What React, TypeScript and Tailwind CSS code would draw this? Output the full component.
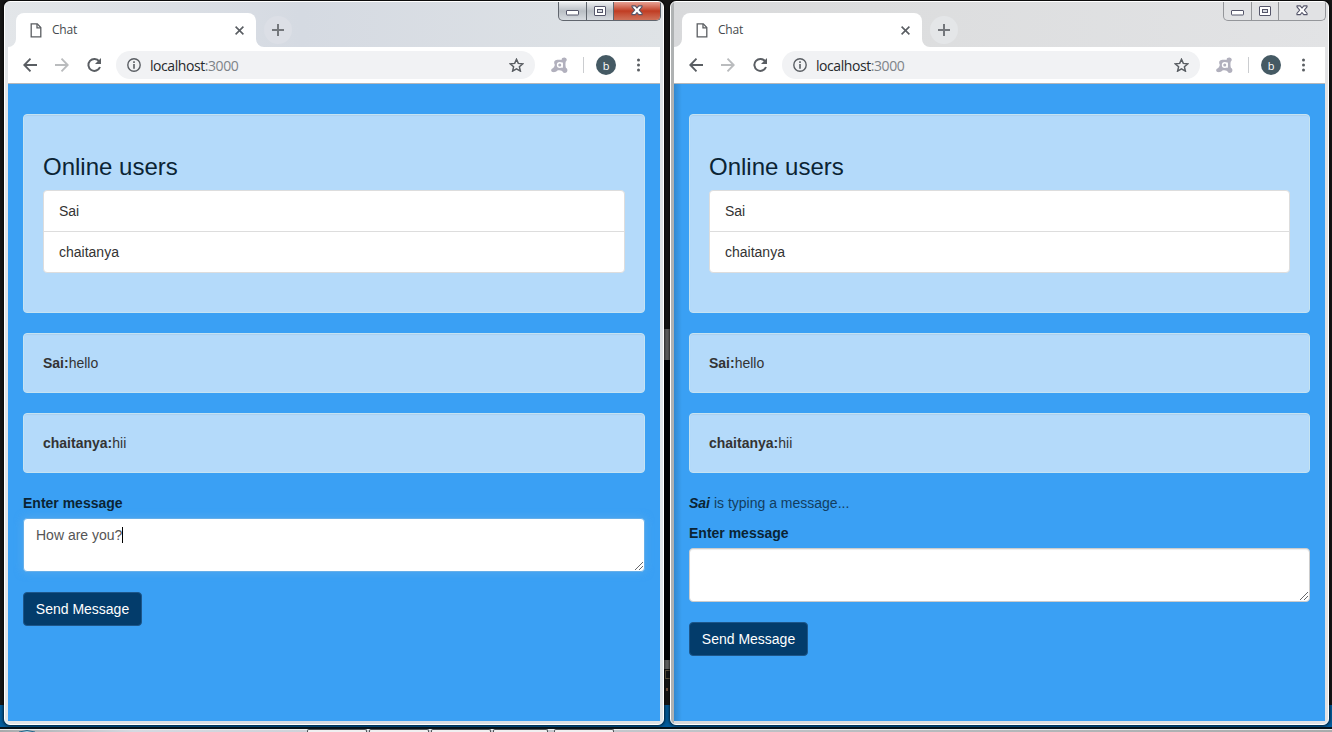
import React from "react";

const chromeFont = "font-['Open_Sans','Noto_Sans',sans-serif]";

function PageIcon() {
  return (
    <svg className="ml-[14px] shrink-0" width="12" height="15" viewBox="0 0 12 15" fill="none" stroke="#5a5d61" strokeWidth="1.3">
      <path d="M1.2 .9h6.1l3.5 3.6v9.3H1.2z" />
      <path d="M7 1v3.8h3.8" />
    </svg>
  );
}

function ExtensionIcon() {
  return (
    <svg className="shrink-0" width="17" height="17" viewBox="0 0 17 17">
      <path
        d="M4.500 3.300C6.600 2.600 8.800 2.700 10.500 2.900 10.700 1 12.500.3 14 .7c2.100.6 2.300 3 .7 4.100-.4 2.200-.3 4.100.2 6 1.700.8 2 3 .8 4.400-1.600 1.500-3.900.8-4.500-1.200-1.700-1-3.300-1-4.800-.5-1.100 1.300-3 2-4.900 1.500-1.900-.9-1.600-2.900-.1-3.600 1.700-.9 2.200-2.400 2.400-3.700-.9-1.300-1-3.700.7-4.400z"
        fill="#b1b0bd"
      />
      <circle cx="8.800" cy="8" r="2.300" fill="none" stroke="#fff" strokeWidth="1.400" />
      <path d="M11.200 5.500v5.200" stroke="#fff" strokeWidth="1.300" />
    </svg>
  );
}

function WindowControls({ active }: { active: boolean }) {
  const line = active ? "border-[#60656d]" : "border-[#94969a]";
  return (
    <div
      className={`absolute right-[2px] top-0 flex h-[19px] w-[103px] overflow-hidden rounded-b-[5px] border border-t-0 ${line} ${
        active ? "bg-linear-to-b from-[#eceef0] via-[#b9bec4] via-50% to-[#d7dbe0]" : "bg-[#e1e2e4]"
      }`}
    >
      <div className={`flex w-[28px] shrink-0 items-center justify-center border-r ${line}`}>
        <svg width="13" height="6" className="mt-[4px]">
          <rect x=".5" y=".5" width="12" height="4.500" rx=".5" fill="#fff" stroke="#55566a" />
        </svg>
      </div>
      <div className={`flex w-[27px] shrink-0 items-center justify-center border-r ${line}`}>
        <svg width="12" height="10" className="-mt-[1px]">
          <rect x=".5" y=".5" width="11" height="9" rx=".5" fill="#fff" stroke="#55566a" />
          <rect x="3.500" y="3.500" width="5" height="3" fill="#d9dce2" stroke="#55566a" />
        </svg>
      </div>
      <div
        className={`flex flex-1 items-center justify-center ${
          active ? "bg-linear-to-b from-[#e6a093] via-[#c03c22] via-50% to-[#cf7159]" : ""
        }`}
      >
        <svg width="12" height="11" viewBox="0 0 13 12" className="-mt-[1px]">
          <path
            d="M1 1h3.600l1.900 2.300L8.400 1H12v1L9 5.500 12 9v1.500H8.400L6.500 8.200l-1.900 2.300H1V9l3-3.500L1 2z"
            fill="#fff"
            stroke="#55566a"
            strokeWidth="1.200"
            strokeLinejoin="round"
          />
        </svg>
      </div>
    </div>
  );
}

function TabStrip({ active }: { active: boolean }) {
  return (
    <div className="flex h-[45px] items-end">
      <svg width="8" height="8" className="shrink-0">
        <path d="M8 0v8H0a8 8 0 0 0 8-8z" fill="#fff" />
      </svg>
      <div className="flex h-[34px] w-[240px] shrink-0 items-center rounded-t-[8px] bg-white">
        <PageIcon />
        <span className="ml-[10px] text-[12px] tracking-[-0.2px] text-[#45494e]">Chat</span>
        <svg className="ml-auto mr-[12px]" width="9" height="9" viewBox="0 0 9 9" stroke="#5a5e63" strokeWidth="1.600">
          <path d="M.6.6l7.800 7.800M8.400.6L.6 8.400" />
        </svg>
      </div>
      <svg width="8" height="8" className="shrink-0">
        <path d="M0 0v8h8a8 8 0 0 1-8-8z" fill="#fff" />
      </svg>
      <div className={`mb-[3px] flex size-[28px] items-center justify-center rounded-full ${active ? "bg-[#dcdfe6]" : "bg-[#e4e6e8]"}`}>
        <svg width="12" height="12" stroke="#74777c" strokeWidth="2">
          <path d="M6 0v12M0 6h12" />
        </svg>
      </div>
    </div>
  );
}

function Toolbar() {
  return (
    <div className="flex h-[37px] items-center border-b border-[#b5b7ba] bg-white pl-[15px] pr-[19px]">
      <svg width="14" height="14" viewBox="0 0 14 14" fill="none" stroke="#5a5e63" strokeWidth="1.900">
        <path d="M14 7H1.500M7.500.7L1.300 7l6.200 6.300" />
      </svg>
      <svg className="ml-[18px]" width="14" height="14" viewBox="0 0 14 14" fill="none" stroke="#babcbe" strokeWidth="1.900">
        <path d="M0 7h12.500M6.500.7L12.700 7l-6.200 6.300" />
      </svg>
      <svg className="ml-[17px]" width="16" height="16" viewBox="0 0 16 16">
        <path d="M13.200 4.300A6 6 0 1 0 14 10" fill="none" stroke="#5a5e63" strokeWidth="2" />
        <path d="M15 1v6H9z" fill="#5a5e63" />
      </svg>
      <div className="ml-[14px] flex h-[28px] flex-1 items-center rounded-full bg-[#f1f2f4] pl-[11px] pr-[11px]">
        <svg width="14" height="14" viewBox="0 0 14 14">
          <circle cx="7" cy="7" r="6.200" fill="none" stroke="#5a5e63" strokeWidth="1.400" />
          <path d="M6.200 3.300h1.600v1.600H6.200zM6.200 6h1.600v4.700H6.200z" fill="#5a5e63" />
        </svg>
        <span className="ml-[9px] text-[14px] tracking-[-0.43px] text-[#26292c]">
          localhost<span className="text-[#7e8388]">:3000</span>
        </span>
        <svg className="ml-auto" width="15" height="14" viewBox="0 0 15 14" fill="none" stroke="#5a5e63" strokeWidth="1.500">
          <path d="M7.500 1.300l1.800 4.100 4.500.4-3.400 3 1 4.300-3.900-2.300-3.900 2.300 1-4.300-3.400-3 4.500-.4z" />
        </svg>
      </div>
      <div className="ml-[16px] flex items-center">
        <ExtensionIcon />
        <div className="ml-[15px] h-[16px] w-px bg-[#cbcdd0]" />
        <div className="ml-[12px] flex size-[20px] items-center justify-center rounded-full bg-[#455a64] text-[11px] leading-none text-white">
          b
        </div>
        <svg className="ml-[20px]" width="5" height="14" fill="#5a5e63">
          <circle cx="2.500" cy="2" r="1.500" />
          <circle cx="2.500" cy="7" r="1.500" />
          <circle cx="2.500" cy="12" r="1.500" />
        </svg>
      </div>
    </div>
  );
}

const wellClass =
  "mb-[20px] rounded-[4px] border border-[#c5e3f2] bg-[#b4dafa] p-[19px] shadow-[inset_0_1px_1px_rgba(0,0,0,0.05)]";

function ChatPage({ draft, typing }: { draft: string; typing?: string }) {
  return (
    <div className="h-[637px] bg-[#3aa0f4] px-[15px] pt-[30px] font-['Liberation_Sans',Arial,sans-serif] text-[14px] leading-[20px] text-[#333]">
      <section className={`${wellClass} h-[199px]`}>
        <h3 className="mb-[10px] mt-[20px] text-[24px] leading-[26.4px] text-[#0b2434]">Online users</h3>
        <ul className="rounded-[4px] border border-[#ddd] bg-white">
          <li className="border-b border-[#ddd] px-[15px] py-[10px]">Sai</li>
          <li className="px-[15px] py-[10px]">chaitanya</li>
        </ul>
      </section>
      <div className={wellClass}>
        <strong>Sai:</strong>hello
      </div>
      <div className={wellClass}>
        <strong>chaitanya:</strong>hii
      </div>
      {typing && (
        <p className="mb-[10px] text-[#123d60]">
          <em className="font-bold text-[#0b2434]">{typing}</em> is typing a message...
        </p>
      )}
      <label className="mb-[5px] block font-bold text-[#0b2434]">Enter message</label>
      <div
        className={`relative flex h-[54px] rounded-[4px] border bg-white px-[12px] py-[6px] text-[#555] ${
          draft
            ? "border-[#66afe9] shadow-[0_0_8px_rgba(102,175,233,0.6)]"
            : "border-[#ccc] shadow-[inset_0_1px_1px_rgba(0,0,0,0.075)]"
        }`}
      >
        {draft && (
          <>
            <span>{draft}</span>
            <span className="mt-[2px] h-[16px] w-px bg-black" />
          </>
        )}
        <svg className="absolute bottom-0 right-0" width="10" height="10" stroke="#66686b" strokeWidth="1">
          <path d="M1 9l8-8M5 9l4-4" />
        </svg>
      </div>
      <button className="mt-[20px] block h-[34px] w-[119px] rounded-[4px] border border-[#1d568a] bg-[#033c6b] text-center text-white">
        Send Message
      </button>
    </div>
  );
}

function BrowserWindow({ active, draft, typing }: { active: boolean; draft: string; typing?: string }) {
  return (
    <div
      className={`relative h-[724px] overflow-hidden rounded-[6px] border border-white px-[3px] ${chromeFont} ${
        active
          ? "w-[660px] bg-linear-to-r from-[#e3e6e9] via-[#d5dae2] via-45% to-[#dfe3e6]"
          : "w-[659px] bg-linear-to-r from-[#d8d9db] via-[#dcddde] via-30% to-[#e2e3e5]"
      }`}
    >
      <WindowControls active={active} />
      <TabStrip active={active} />
      <Toolbar />
      <ChatPage draft={draft} typing={typing} />
      {!active && (
        <>
          <div className="absolute bottom-[3px] left-[3px] top-[82px] w-[8px] bg-linear-to-r from-black/15 to-transparent" />
          <div className="absolute inset-y-0 left-0 w-[3px] bg-[#a5a7a9]/80" />
        </>
      )}
    </div>
  );
}

const taskClass = "h-[3px] rounded-t-[2px] border-x border-t border-[#4b5054] bg-[#f0f0f1]";

function Desktop() {
  return (
    <div className="absolute inset-0 flex flex-col">
      <div className="relative h-[705px] bg-[#171717]">
        <div className="absolute left-[664px] top-[329px] h-[31px] w-[6px] bg-[#656565]" />
        <div className="absolute left-[664px] top-[360px] h-[300px] w-[6px] bg-black" />
        <div className="absolute left-[664px] top-[660px] h-[9px] w-[6px] bg-[#696969]" />
        <div className="absolute left-[665px] top-[670px] h-[9px] w-[5px] border border-r-0 border-[#665943]" />
        <div className="absolute left-[666px] top-[688px] h-[3px] w-[2px] bg-[#72513f]" />
      </div>
      <div className="h-[22px] bg-[#035c9c]" />
      <div className="h-[2px] bg-[#07131c]" />
      <div className="relative h-[3px] border-t border-[#eceeef] bg-linear-to-r from-[#a7aaab] via-[#d5d9e1] via-10% to-[#a8abac]">
        <div className="absolute -top-px left-[307px] flex gap-[2px]">
          <div className={`${taskClass} w-[60px]`} />
          <div className={`${taskClass} w-[60px]`} />
          <div className={`${taskClass} w-[60px]`} />
          <div className={`${taskClass} w-[55px]`} />
          <div className={`${taskClass} ml-[4px] w-[60px]`} />
        </div>
        <svg className="absolute bottom-0 left-[18px]" width="18" height="2">
          <path d="M1 2Q9-1 17 2" fill="#a9cfdf" stroke="#23668b" />
        </svg>
      </div>
    </div>
  );
}

export default function App() {
  return (
    <main className="relative h-[732px] w-[1332px] overflow-hidden">
      <Desktop />
      <div className="absolute left-[4px] top-[1px] rounded-[6px] shadow-[0_0_3px_1px_rgba(0,0,0,0.7)]">
        <BrowserWindow active draft="How are you?" />
      </div>
      <div className="absolute left-[670px] top-[1px] rounded-[6px] shadow-[0_0_3px_1px_rgba(0,0,0,0.7)]">
        <BrowserWindow active={false} draft="" typing="Sai" />
      </div>
    </main>
  );
}
